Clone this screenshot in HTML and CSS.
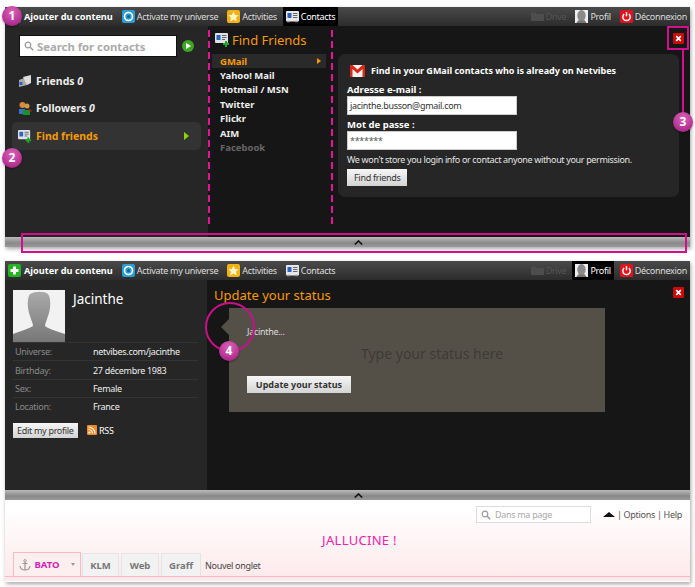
FILE: index.html
```html
<!DOCTYPE html>
<html lang="fr">
<head>
    <meta charset="UTF-8">
    <title>Netvibes - Contacts et Profil</title>
    <link rel="stylesheet" href="styles.css">
</head>
<body>
<svg class="defs" width="0" height="0">
    <symbol id="i-add" viewBox="0 0 13 13"><rect width="13" height="13" rx="2" fill="#22b422"/><path d="M5 2.500h3V5h2.500v3H8v2.500H5V8H2.500V5H5z" fill="#fff"/></symbol>
    <symbol id="i-universe" viewBox="0 0 13 13"><rect width="13" height="13" rx="2" fill="#2a9fd6"/><circle cx="6.500" cy="6.500" r="4" fill="none" stroke="#fff" stroke-width="1.600"/><circle cx="6.500" cy="6.500" r="1.500" fill="#16618a"/></symbol>
    <symbol id="i-star" viewBox="0 0 13 13"><rect width="13" height="13" rx="2" fill="#f2b215"/><path d="M6.500 1.500l1.600 3.400 3.600.4-2.700 2.500.8 3.700-3.300-1.900-3.300 1.900.8-3.700L1.300 5.300l3.600-.4z" fill="#fff6c8"/></symbol>
    <symbol id="i-contacts" viewBox="0 0 13 13"><rect y="1" width="13" height="10.500" rx="1" fill="#e8e8e8"/><rect x="1.500" y="3" width="4" height="5" fill="#2b62c4"/><path d="M7 3.500h4.500M7 5.500h4.500M7 7.500h4.500" stroke="#666"/><path d="M1 11.500h3M9 11.500h3" stroke="#999" stroke-width="1.500"/></symbol>
    <symbol id="i-drive" viewBox="0 0 13 13"><path d="M0 2.500h5l1 1.500h7v7H0z" fill="#4d4d4d"/></symbol>
    <symbol id="i-avatar" viewBox="0 0 14 14"><rect width="14" height="14" fill="#eee"/><ellipse cx="7" cy="6" rx="4.500" ry="6" fill="#8a8a8a"/><path d="M1.500 14l2-3h7l2 3z" fill="#777"/></symbol>
    <symbol id="i-power" viewBox="0 0 14 14"><rect width="14" height="14" rx="2" fill="#e0141a"/><path d="M4.500 4.300a4 4 0 1 0 5 0" fill="none" stroke="#fff" stroke-width="1.600"/><path d="M7 2.200v4.600" stroke="#fff" stroke-width="1.600"/></symbol>
    <symbol id="i-close" viewBox="0 0 12 12"><rect width="12" height="12" rx="1" fill="#cc0a0a"/><path d="M3.500 3.500l5 5M8.500 3.500l-5 5" stroke="#fff" stroke-width="1.800"/></symbol>
    <symbol id="i-chevron" viewBox="0 0 9 5"><path d="M.8 4.500L4.500 1l3.700 3.500" fill="none" stroke="#111" stroke-width="1.600"/></symbol>
    <symbol id="i-search" viewBox="0 0 10 10"><circle cx="4" cy="4" r="2.800" fill="none" stroke="#999" stroke-width="1.200"/><path d="M6 6l3.200 3.200" stroke="#999" stroke-width="1.500"/></symbol>
    <symbol id="i-addcontact" viewBox="0 0 15 15"><rect y="1" width="13" height="10" rx="1" fill="#dfe3e8"/><rect x="1.500" y="3" width="4" height="5" fill="#2b62c4"/><path d="M7 3.500h4.500M7 5.500h4.500M7 7.500h3" stroke="#666"/><path d="M10 9h2v2h2v2h-2v2h-2v-2H8v-2h2z" fill="#18a82c"/></symbol>
</svg>

<main class="page">
    <section class="win">
        <nav class="toolbar">
            <div class="tools">
                <a class="tool tool-add"><svg class="ico"><use href="#i-add"/></svg>Ajouter du contenu</a>
                <a class="tool"><svg class="ico"><use href="#i-universe"/></svg>Activate my universe</a>
                <a class="tool"><svg class="ico"><use href="#i-star"/></svg>Activities</a>
                <a class="tool current"><svg class="ico"><use href="#i-contacts"/></svg>Contacts</a>
            </div>
            <div class="tools">
                <a class="tool off"><svg class="ico"><use href="#i-drive"/></svg>Drive</a>
                <a class="tool"><svg class="ico"><use href="#i-avatar"/></svg>Profil</a>
                <a class="tool"><svg class="ico"><use href="#i-power"/></svg>Déconnexion</a>
            </div>
        </nav>
        <div class="panel panel-contacts">
            <aside class="side">
                <div class="search-row">
                    <div class="search-box"><svg class="search-ico"><use href="#i-search"/></svg>Search for contacts</div>
                    <span class="go"></span>
                </div>
                <a class="side-link">
                    <svg class="side-ico" viewBox="0 0 14 14"><path d="M1 6l8-3v8l-8 2z" fill="#aaa"/><path d="M5 3l8-2v8l-4 2z" fill="#ddd"/><rect x="1.500" y="8" width="3" height="3" fill="#2b62c4"/></svg>
                    <span>Friends <i>0</i></span>
                </a>
                <a class="side-link">
                    <svg class="side-ico" viewBox="0 0 14 14"><circle cx="4.500" cy="4" r="3" fill="#d98a3a"/><circle cx="9" cy="5" r="2.500" fill="#c8a048"/><path d="M1 8h6v5H1z" fill="#3a6fd0"/><path d="M5 9h7v5H5z" fill="#18932c"/><path d="M10 7l4 3-2 1z" fill="#d01818"/></svg>
                    <span>Followers <i>0</i></span>
                </a>
                <a class="side-link selected">
                    <svg class="side-ico"><use href="#i-addcontact"/></svg>
                    <span>Find friends</span>
                    <b class="tri"></b>
                </a>
            </aside>
            <div class="services">
                <h2 class="services-title"><svg class="title-ico"><use href="#i-addcontact"/></svg>Find Friends</h2>
                <ul class="service-list">
                    <li class="selected">GMail<b class="mini-tri"></b></li>
                    <li>Yahoo! Mail</li>
                    <li>Hotmail / MSN</li>
                    <li>Twitter</li>
                    <li>Flickr</li>
                    <li>AIM</li>
                    <li class="muted">Facebook</li>
                </ul>
            </div>
            <div class="finder">
                <a class="close"><svg><use href="#i-close"/></svg></a>
                <form class="card">
                    <h3 class="card-title">
                        <svg class="gmail" viewBox="0 0 15 12"><rect width="15" height="12" fill="#f4f0ec"/><path d="M0 0h2.500l5 4.500 5-4.500H15v12h-2.500V4l-5 4.500L2.500 4v8H0z" fill="#d8281c"/></svg>
                        Find in your GMail contacts who is already on Netvibes
                    </h3>
                    <label class="field-label">Adresse e-mail :</label>
                    <div class="field">jacinthe.busson@gmail.com</div>
                    <label class="field-label second">Mot de passe :</label>
                    <div class="field stars">*******</div>
                    <p class="note">We won't store you login info or contact anyone without your permission.</p>
                    <span class="btn">Find friends</span>
                </form>
            </div>
        </div>
        <div class="handle"><svg class="chevron"><use href="#i-chevron"/></svg></div>
    </section>

    <section class="win">
        <nav class="toolbar">
            <div class="tools">
                <a class="tool tool-add"><svg class="ico"><use href="#i-add"/></svg>Ajouter du contenu</a>
                <a class="tool"><svg class="ico"><use href="#i-universe"/></svg>Activate my universe</a>
                <a class="tool"><svg class="ico"><use href="#i-star"/></svg>Activities</a>
                <a class="tool"><svg class="ico"><use href="#i-contacts"/></svg>Contacts</a>
            </div>
            <div class="tools">
                <a class="tool off"><svg class="ico"><use href="#i-drive"/></svg>Drive</a>
                <a class="tool current"><svg class="ico"><use href="#i-avatar"/></svg>Profil</a>
                <a class="tool"><svg class="ico"><use href="#i-power"/></svg>Déconnexion</a>
            </div>
        </nav>
        <div class="panel panel-profile">
            <aside class="profile">
                <div class="profile-head">
                    <svg class="photo" viewBox="0 0 52 52">
                        <defs><linearGradient id="bust" x1="0" y1="0" x2="0" y2="1"><stop offset="0" stop-color="#aaa"/><stop offset="1" stop-color="#777"/></linearGradient></defs>
                        <rect width="52" height="52" fill="#f2f2f2"/>
                        <path d="M17 4c6-3 14-3 18 0 3 4 3 14 0 22-1 4-3 7-3 10 3 3 12 5 20 8v8H0v-8c7-3 16-5 20-8 0-3-2-6-3-10-3-8-3-18 0-22z" fill="url(#bust)"/>
                    </svg>
                    <h2 class="profile-name">Jacinthe</h2>
                </div>
                <dl class="facts">
                    <div><dt>Universe:</dt><dd>netvibes.com/jacinthe</dd></div>
                    <div><dt>Birthday:</dt><dd>27 décembre 1983</dd></div>
                    <div><dt>Sex:</dt><dd>Female</dd></div>
                    <div><dt>Location:</dt><dd>France</dd></div>
                </dl>
                <div class="profile-actions">
                    <span class="btn btn-edit">Edit my profile</span>
                    <a class="rss">
                        <svg viewBox="0 0 10 10"><rect width="10" height="10" rx="1" fill="#f08a24"/><circle cx="2.500" cy="7.500" r="1.100" fill="#fff"/><path d="M1.500 4.500a4 4 0 0 1 4 4M1.500 2a6.500 6.500 0 0 1 6.500 6.500" fill="none" stroke="#fff" stroke-width="1.100"/></svg>
                        RSS
                    </a>
                </div>
            </aside>
            <div class="status">
                <a class="close"><svg><use href="#i-close"/></svg></a>
                <h2 class="status-title">Update your status</h2>
                <div class="status-box">
                    <p class="status-who">Jacinthe...</p>
                    <p class="status-hint">Type your status here</p>
                    <span class="btn btn-strong">Update your status</span>
                </div>
            </div>
        </div>
        <div class="handle"><svg class="chevron"><use href="#i-chevron"/></svg></div>
        <div class="site">
            <div class="site-top">
                <div class="site-search"><svg class="search-ico"><use href="#i-search"/></svg>Dans ma page</div>
                <div class="site-links"><b class="eject"></b><span>|</span> <a>Options</a> <span>|</span> <a>Help</a></div>
            </div>
            <h1 class="site-title">JALLUCINE !</h1>
            <div class="tabs">
                <a class="tab active">
                    <svg class="anchor" viewBox="0 0 12 12"><path d="M6 3v8M3.500 4.500h5M1 7c.5 3 3 4 5 4s4.500-1 5-4" fill="none" stroke="#999" stroke-width="1.200"/><circle cx="6" cy="1.800" r="1.200" fill="none" stroke="#999"/></svg>
                    BATO<b class="tab-menu"></b>
                </a>
                <a class="tab tab-klm">KLM</a>
                <a class="tab tab-web">Web</a>
                <a class="tab tab-graff">Graff</a>
                <span class="tab-new">Nouvel onglet</span>
            </div>
        </div>
    </section>

    <!-- annotations drawn over the screenshots -->
    <div class="dash d1"></div>
    <div class="dash d2"></div>
    <div class="mark-box mb-close"></div>
    <div class="mark-box mb-handle"></div>
    <div class="mark-line"></div>
    <div class="mark-ring"></div>
    <span class="badge b1">1</span>
    <span class="badge b2">2</span>
    <span class="badge b3">3</span>
    <span class="badge b4">4</span>
</main>
</body>
</html>
```
FILE: styles.css
```css
* {
    box-sizing: border-box;
}

html, body {
    margin: 0;
    background: #fff;
}

body {
    font-family: "Noto Sans", sans-serif;
    font-size: 9px;
    letter-spacing: -0.3px;
    color: #fff;
}

h1, h2, h3, p, ul, dl, dd {
    margin: 0;
    padding: 0;
}

.defs {
    position: absolute;
}

.page {
    position: relative;
    width: 695px;
    height: 587px;
    padding: 7px 5px 0;
}

.win {
    width: 685px;
    margin-bottom: 14px;
    box-shadow: 1px 2px 4px rgba(0, 0, 0, 0.35);
}

/* toolbar */
.toolbar {
    display: flex;
    justify-content: space-between;
    height: 19px;
    background: linear-gradient(#4a4a4a, #2c2c2c);
}

.tools {
    display: flex;
}

.tool {
    display: flex;
    align-items: center;
    gap: 2px;
    padding: 0 3px;
    margin-left: 3px;
    color: #ddd;
}

.tool-add {
    margin-left: 0;
    gap: 3px;
    color: #fff;
    font-size: 9.200px;
    font-weight: bold;
    letter-spacing: 0;
}

.tool.current {
    background: #000;
    color: #fff;
}

.tool.off {
    color: #555;
}

.ico {
    width: 13px;
    height: 13px;
}

/* panels */
.panel {
    display: flex;
    height: 211px;
    background: #161616;
}

.panel-profile {
    height: 210px;
}

.side {
    width: 203px;
    padding: 9px 7px 0;
    background: #262626;
}

.search-row {
    display: flex;
    align-items: center;
    gap: 5px;
    margin-left: 7px;
    margin-bottom: 10px;
}

.search-box {
    display: flex;
    align-items: center;
    gap: 3px;
    width: 158px;
    height: 22px;
    padding-left: 4px;
    background: #fff;
    border: 1px solid #111;
    color: #aaa;
    font-size: 11.300px;
    font-weight: bold;
    letter-spacing: 0;
}

.search-ico {
    width: 10px;
    height: 10px;
}

.go {
    position: relative;
    width: 12px;
    height: 12px;
    border-radius: 50%;
    background: #3fa524;
}

.go::after {
    content: "";
    position: absolute;
    left: 4px;
    top: 3px;
    border-left: 5px solid #fff;
    border-top: 3px solid transparent;
    border-bottom: 3px solid transparent;
}

.side-link {
    display: flex;
    align-items: center;
    gap: 4px;
    height: 27.500px;
    padding-left: 6px;
    padding-right: 12px;
    font-size: 10.500px;
    font-weight: bold;
    letter-spacing: 0;
    color: #eee;
    border-radius: 5px;
}

.side-link i {
    font-style: italic;
}

.side-link.selected {
    height: 28px;
    color: #f79a08;
    background: #333;
}

.side-ico {
    width: 14px;
    height: 14px;
    flex: none;
}

.tri {
    margin-left: auto;
    border-left: 5px solid #8fd10c;
    border-top: 4px solid transparent;
    border-bottom: 4px solid transparent;
}

.services {
    width: 124px;
    padding: 5px 6px 0 4px;
}

.services-title {
    display: flex;
    align-items: center;
    gap: 2px;
    margin: 0 0 6px 3px;
    font-size: 13px;
    font-weight: normal;
    letter-spacing: 0;
    color: #f79a08;
    height: 17px;
}

.title-ico {
    width: 15px;
    height: 15px;
}

.service-list {
    list-style: none;
}

.service-list li {
    display: flex;
    align-items: center;
    justify-content: space-between;
    height: 14.400px;
    padding: 0 5px 0 8px;
    font-size: 9.500px;
    font-weight: bold;
    letter-spacing: 0;
    color: #eee;
}

.service-list li.selected {
    background: #2a2a2a;
    color: #f79a08;
}

.service-list li.muted {
    color: #666;
}

.mini-tri {
    border-left: 4px solid #f79a08;
    border-top: 3px solid transparent;
    border-bottom: 3px solid transparent;
}

.finder {
    flex: 1;
    padding: 28px 11px 0 6px;
    position: relative;
}

.close {
    position: absolute;
    top: 7px;
    right: 6px;
    width: 11px;
    height: 11px;
}

.close svg {
    display: block;
    width: 11px;
    height: 11px;
}

.card {
    height: 143px;
    padding: 10px 9px 0;
    background: #262626;
    border-radius: 7px;
}

.card-title {
    display: flex;
    align-items: center;
    gap: 6px;
    height: 13px;
    margin: 0 0 6px 3px;
    font-size: 9px;
    font-weight: bold;
    letter-spacing: 0;
}

.gmail {
    width: 15px;
    height: 12px;
}

.field-label {
    display: block;
    height: 12px;
    margin-bottom: 1px;
    font-size: 9.500px;
    font-weight: bold;
    letter-spacing: 0;
}

.field-label.second {
    margin-top: 3px;
}

.field {
    width: 170px;
    height: 19px;
    padding: 0 2px;
    background: #fff;
    border: 1px solid #ccc;
    color: #333;
    line-height: 17px;
}

.field.stars {
    color: #555;
}

.note {
    margin: 4px 0 4px;
    height: 11px;
    line-height: 11px;
    letter-spacing: -0.35px;
    color: #e4e4e4;
}

.btn {
    display: inline-block;
    height: 17px;
    padding: 0 7px;
    line-height: 17px;
    color: #333;
    background: linear-gradient(#f6f6f6, #d4d4d4);
}

/* profile window */
.profile {
    width: 202px;
    padding: 10px 9px 0 8px;
    background: #262626;
}

.profile-head {
    display: flex;
    gap: 8px;
    height: 52px;
}

.photo {
    width: 52px;
    height: 52px;
}

.profile-name {
    font-size: 13.500px;
    font-weight: normal;
    letter-spacing: 0;
}

.facts div {
    display: flex;
    height: 18.400px;
    align-items: center;
    padding-left: 2px;
    border-top: 1px solid #333;
}

.facts dt {
    width: 78px;
    color: #8a8a8a;
}

.facts dd {
    color: #eee;
}

.profile-actions {
    display: flex;
    align-items: center;
    gap: 9px;
    margin-top: 7px;
}

.btn-edit {
    width: 65px;
    height: 15px;
    padding: 0 4px;
    line-height: 15px;
    white-space: nowrap;
}

.rss {
    display: flex;
    align-items: center;
    gap: 2px;
}

.rss svg {
    width: 10px;
    height: 10px;
}

.status {
    flex: 1;
    position: relative;
    padding: 6px 0 0 7px;
}

.status-title {
    height: 15px;
    font-size: 13px;
    font-weight: normal;
    letter-spacing: 0;
    color: #f79a08;
    margin-bottom: 7px;
}

.status-box {
    position: relative;
    width: 376px;
    height: 104px;
    margin-left: 15px;
    padding: 18px 18px 0;
    background: #545048;
}

.status-box::before {
    content: "";
    position: absolute;
    left: -8px;
    top: 11px;
    border-right: 8px solid #545048;
    border-top: 8px solid transparent;
    border-bottom: 8px solid transparent;
}

.status-who {
    height: 11px;
    line-height: 11px;
    color: #ddd;
}

.status-hint {
    margin-top: 7px;
    height: 24px;
    padding-left: 30px;
    text-align: center;
    font-size: 14px;
    letter-spacing: 0;
    color: #3d3b36;
}

.btn-strong {
    margin-top: 8px;
    width: 104px;
    padding: 0;
    text-align: center;
    font-weight: bold;
    letter-spacing: 0;
    white-space: nowrap;
}

/* handle between the panel and the page */
.handle {
    display: flex;
    justify-content: center;
    height: 10px;
    padding-left: 21px;
    background: linear-gradient(#bbb, #888 60%, #999);
}

.chevron {
    width: 9px;
    height: 5px;
    margin-top: 3px;
}

/* page under the panel */
.site {
    position: relative;
    height: 82px;
    background: linear-gradient(#fff 10%, #fde8ea);
    border-bottom: 1px solid #fff;
    color: #555;
}

.site-top {
    display: flex;
    justify-content: flex-end;
    align-items: center;
    gap: 12px;
    padding: 6px 8px 0 0;
}

.site-search {
    display: flex;
    align-items: center;
    gap: 4px;
    width: 115px;
    height: 17px;
    padding-left: 4px;
    background: #fff;
    border: 1px solid #ddd;
    color: #aaa;
}

.site-links {
    display: flex;
    align-items: center;
    gap: 2px;
}

.eject {
    border-bottom: 5px solid #111;
    border-left: 6px solid transparent;
    border-right: 6px solid transparent;
}

.site-title {
    margin-top: 8px;
    padding-left: 24px;
    text-align: center;
    font-size: 13px;
    font-weight: normal;
    color: #ee22aa;
    letter-spacing: 0.3px;
    height: 16px;
}

.tabs {
    position: absolute;
    left: 0;
    right: 0;
    bottom: 4px;
    display: flex;
    align-items: flex-end;
    gap: 2px;
    padding-left: 8px;
    border-bottom: 1px solid #fcb8c2;
}

.tab {
    display: flex;
    align-items: center;
    justify-content: center;
    height: 23px;
    background: #f2f2f2;
    border: 1px solid #e4e4e4;
    border-bottom: 0;
    font-size: 9.500px;
    font-weight: bold;
    letter-spacing: 0;
    color: #777;
}

.tab-klm {
    width: 37px;
}

.tab-web {
    width: 38px;
}

.tab-graff {
    width: 40px;
}

.tab.active {
    height: 24px;
    margin-right: -1px;
    width: 68px;
    padding: 0 2px;
    gap: 3px;
    background: #fdeef0;
    border: 1px solid #fcb8c2;
    border-bottom: 0;
    color: #d423b4;
}

.anchor {
    width: 12px;
    height: 12px;
}

.tab-menu {
    margin-left: 8px;
    border-top: 3px solid #999;
    border-left: 2px solid transparent;
    border-right: 2px solid transparent;
}

.tab-new {
    margin-left: 2px;
    line-height: 21px;
    color: #444;
}

/* annotations */
.dash {
    position: absolute;
    top: 30px;
    width: 2px;
    height: 198px;
    background: repeating-linear-gradient(#e6129a 0 7px, transparent 7px 11px);
}

.d1 {
    left: 208px;
}

.d2 {
    left: 331px;
}

.mark-box {
    position: absolute;
    border: 2px solid #d0108c;
}

.mb-close {
    left: 667px;
    top: 26px;
    width: 22px;
    height: 24px;
}

.mb-handle {
    left: 21px;
    top: 233px;
    width: 666px;
    height: 20px;
}

.mark-line {
    position: absolute;
    left: 682px;
    top: 50px;
    width: 2px;
    height: 64px;
    background: #d0108c;
}

.mark-ring {
    position: absolute;
    left: 205px;
    top: 302px;
    width: 50px;
    height: 50px;
    border: 2px solid #c8108a;
    border-radius: 50%;
}

.badge {
    position: absolute;
    width: 20px;
    height: 20px;
    line-height: 20px;
    text-align: center;
    border-radius: 50%;
    background: radial-gradient(circle at 50% 30%, #d964b8, #a3167f);
    font-size: 12px;
    font-weight: bold;
    letter-spacing: 0;
    color: #fff;
    box-shadow: 0 1px 2px rgba(0, 0, 0, 0.4);
}

.b1 {
    left: 2px;
    top: 6px;
}

.b2 {
    left: 2px;
    top: 148px;
}

.b3 {
    left: 673px;
    top: 112px;
}

.b4 {
    left: 219px;
    top: 341px;
}
```
